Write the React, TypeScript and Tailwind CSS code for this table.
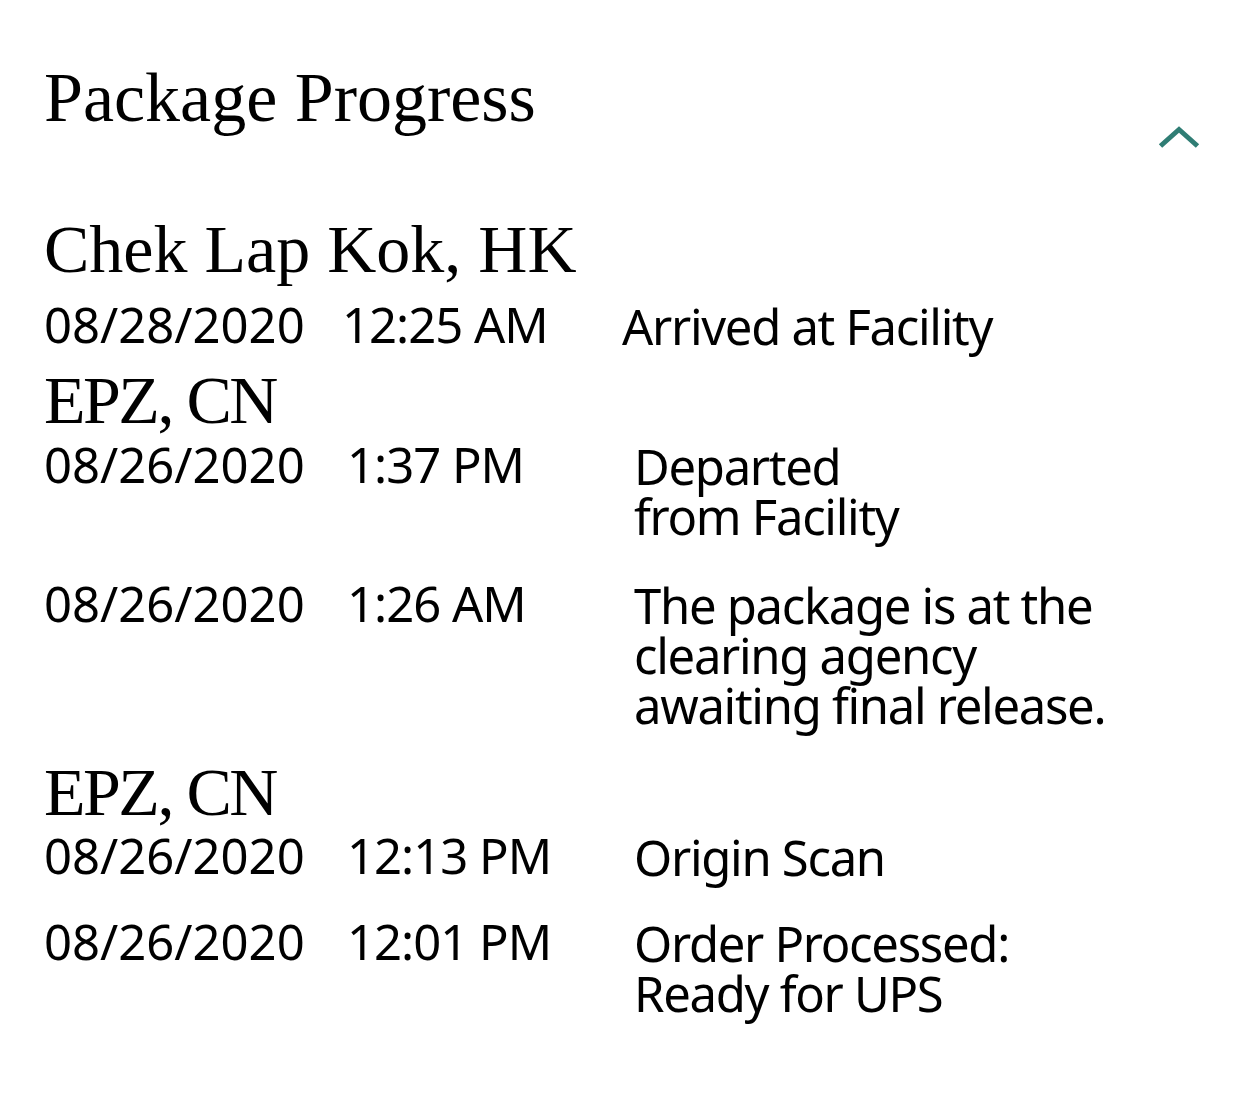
import React from "react";

const serif = { fontFamily: '"Liberation Serif", "DejaVu Serif", serif' };
const sans = { fontFamily: '"Noto Sans", "Open Sans", sans-serif' };

function Row({
  date,
  time,
  lines,
  first,
  className,
}: {
  date: string;
  time: string;
  lines: string[];
  first?: boolean;
  className?: string;
}) {
  return (
    <div
      className={
        (first ? "grid grid-cols-[298px_280px_1fr] " : "grid grid-cols-[303px_287px_1fr] ") +
        "text-[49px] leading-[50px] text-black " +
        (className ?? "")
      }
      style={sans}
    >
      <div>{date}</div>
      <div className="tracking-[-1px]">{time}</div>
      <div className="tracking-[-1.3px] pt-[2px]">
        {lines.map((l, i) => (
          <div key={i}>{l}</div>
        ))}
      </div>
    </div>
  );
}

function Heading({ children, className }: { children: React.ReactNode; className?: string }) {
  return (
    <div className={"text-[68px] leading-[72px] text-black " + (className ?? "")} style={serif}>
      {children}
    </div>
  );
}

export default function App() {
  return (
    <div className="w-[1242px] h-[1110px] bg-white pl-[44px] pr-[41px] pt-[58px] overflow-hidden">
      <div className="flex items-start justify-between h-[80px]">
        <div className="text-[70px] leading-[80px] text-black" style={serif}>
          Package Progress
        </div>
        <svg width="43" height="24" viewBox="0 0 43 24" className="mt-[68px] shrink-0">
          <polyline
            points="2.5,20 21,3.5 39.5,20"
            fill="none"
            stroke="#2f7d74"
            strokeWidth="5"
            strokeLinecap="butt"
            strokeLinejoin="miter"
          />
        </svg>
      </div>

      <Heading className="mt-[75px]">Chek Lap Kok, HK</Heading>
      <Row first className="mt-[14px]" date="08/28/2020" time="12:25 AM" lines={["Arrived at Facility"]} />

      <Heading className="mt-[13px] tracking-[-2.5px]">EPZ, CN</Heading>
      <Row className="mt-[3px]" date="08/26/2020" time="1:37 PM" lines={["Departed", "from Facility"]} />
      <Row
        className="mt-[37px]"
        date="08/26/2020"
        time="1:26 AM"
        lines={["The package is at the", "clearing agency", "awaiting final release."]}
      />

      <Heading className="mt-[26px] tracking-[-2.5px]">EPZ, CN</Heading>
      <Row className="mt-[2px]" date="08/26/2020" time="12:13 PM" lines={["Origin Scan"]} />
      <Row
        className="mt-[34px]"
        date="08/26/2020"
        time="12:01 PM"
        lines={["Order Processed:", "Ready for UPS"]}
      />
    </div>
  );
}
